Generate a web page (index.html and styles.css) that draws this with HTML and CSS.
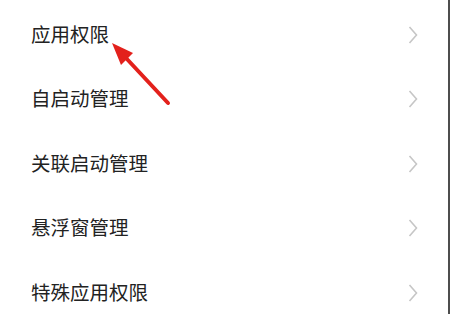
FILE: index.html
```html
<!DOCTYPE html>
<html lang="zh-CN">
<head>
    <meta charset="UTF-8">
    <meta name="viewport" content="width=device-width, initial-scale=1.0">
    <title>应用管理</title>
    <link rel="stylesheet" href="styles.css">
</head>
<body>
    <div class="screen">
        <ul class="menu">
            <li class="menu-item">
                <span class="label">应用权限</span>
                <svg class="chevron" width="10" height="20" viewBox="0 0 10 20"><path d="M1.5 2 L8.5 10 L1.5 18" /></svg>
            </li>
            <li class="menu-item">
                <span class="label">自启动管理</span>
                <svg class="chevron" width="10" height="20" viewBox="0 0 10 20"><path d="M1.5 2 L8.5 10 L1.5 18" /></svg>
            </li>
            <li class="menu-item">
                <span class="label">关联启动管理</span>
                <svg class="chevron" width="10" height="20" viewBox="0 0 10 20"><path d="M1.5 2 L8.5 10 L1.5 18" /></svg>
            </li>
            <li class="menu-item">
                <span class="label">悬浮窗管理</span>
                <svg class="chevron" width="10" height="20" viewBox="0 0 10 20"><path d="M1.5 2 L8.5 10 L1.5 18" /></svg>
            </li>
            <li class="menu-item">
                <span class="label">特殊应用权限</span>
                <svg class="chevron" width="10" height="20" viewBox="0 0 10 20"><path d="M1.5 2 L8.5 10 L1.5 18" /></svg>
            </li>
        </ul>

        <!-- 红色箭头标注 -->
        <svg class="pointer" width="450" height="314" viewBox="0 0 450 314">
            <line x1="126" y1="58" x2="168" y2="103" stroke="#e3211c" stroke-width="4" stroke-linecap="round" />
            <polygon points="112,43 133,53 121,65" fill="#e3211c" />
        </svg>
    </div>
</body>
</html>
```

FILE: styles.css
```css
html, body {
    margin: 0;
    padding: 0;
    background: #fff;
}
.screen {
    position: relative;
    width: 450px;
    height: 314px;
    box-sizing: border-box;
    border-right: 2px solid #4d4d4d;
    overflow: hidden;
    font-family: "Noto Sans CJK SC", "Noto Sans", sans-serif;
}
.menu {
    list-style: none;
    margin: 0;
    padding: 1px 0 0 0;
}
.menu-item {
    display: flex;
    align-items: center;
    justify-content: space-between;
    height: 64.5px;
    padding: 0 30px 0 31px;
}
.label {
    font-size: 19.5px;
    color: #222;
    letter-spacing: 0;
}
.chevron {
    fill: none;
    stroke: #c6c6c6;
    stroke-width: 1.6;
    margin-top: 3px;
}
.pointer {
    position: absolute;
    left: 0;
    top: 0;
}
```
